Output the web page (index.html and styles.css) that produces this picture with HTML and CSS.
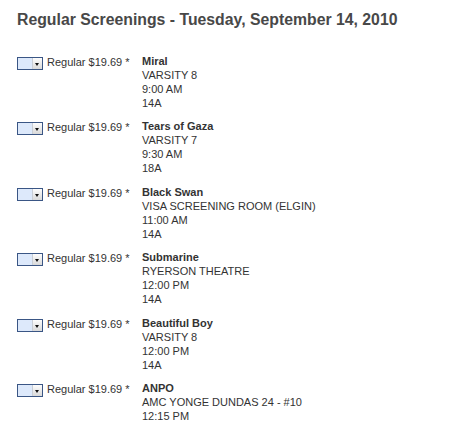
FILE: index.html
```html
<!DOCTYPE html>
<html lang="en">
<head>
    <meta charset="UTF-8">
    <title>Regular Screenings</title>
    <link rel="stylesheet" href="styles.css">
</head>
<body>
    <div class="page">
        <h1>Regular Screenings - Tuesday, September 14, 2010</h1>

        <div class="screening">
            <span class="picker"><span class="picker-btn"></span></span>
            <span class="price">Regular $19.69 *</span>
            <div class="info">
                <strong>Miral</strong>
                <div>VARSITY 8</div>
                <div>9:00 AM</div>
                <div>14A</div>
            </div>
        </div>

        <div class="screening">
            <span class="picker"><span class="picker-btn"></span></span>
            <span class="price">Regular $19.69 *</span>
            <div class="info">
                <strong>Tears of Gaza</strong>
                <div>VARSITY 7</div>
                <div>9:30 AM</div>
                <div>18A</div>
            </div>
        </div>

        <div class="screening">
            <span class="picker"><span class="picker-btn"></span></span>
            <span class="price">Regular $19.69 *</span>
            <div class="info">
                <strong>Black Swan</strong>
                <div>VISA SCREENING ROOM (ELGIN)</div>
                <div>11:00 AM</div>
                <div>14A</div>
            </div>
        </div>

        <div class="screening">
            <span class="picker"><span class="picker-btn"></span></span>
            <span class="price">Regular $19.69 *</span>
            <div class="info">
                <strong>Submarine</strong>
                <div>RYERSON THEATRE</div>
                <div>12:00 PM</div>
                <div>14A</div>
            </div>
        </div>

        <div class="screening">
            <span class="picker"><span class="picker-btn"></span></span>
            <span class="price">Regular $19.69 *</span>
            <div class="info">
                <strong>Beautiful Boy</strong>
                <div>VARSITY 8</div>
                <div>12:00 PM</div>
                <div>14A</div>
            </div>
        </div>

        <div class="screening">
            <span class="picker"><span class="picker-btn"></span></span>
            <span class="price">Regular $19.69 *</span>
            <div class="info">
                <strong>ANPO</strong>
                <div>AMC YONGE DUNDAS 24 - #10</div>
                <div>12:15 PM</div>
                <div>14A</div>
            </div>
        </div>
    </div>
</body>
</html>
```

FILE: styles.css
```css
body {
    margin: 0;
    background-color: white;
    font-family: "Liberation Sans", Arial, sans-serif;
    color: #333;
}

.page {
    padding: 0 17px;
}

h1 {
    margin: 11px 0 25px;
    font-size: 15.8px;
    line-height: 18px;
    color: #484848;
}

.screening {
    display: flex;
    align-items: flex-start;
    height: 56px;
    margin-bottom: 9.4px;
    font-size: 11px;
    line-height: 14px;
}

.picker {
    display: flex;
    justify-content: flex-end;
    width: 24px;
    height: 11px;
    margin-top: 3px;
    border: 1px solid #3a5685;
    background-color: #dde9fb;
}

.picker-btn {
    position: relative;
    width: 9px;
    height: 11px;
    background: linear-gradient(#fdfdfd, #d9d9d9);
    border-left: 1px solid #c9ced6;
}

.picker-btn::after {
    content: "";
    position: absolute;
    left: 2px;
    top: 5px;
    border-left: 2.5px solid transparent;
    border-right: 2.5px solid transparent;
    border-top: 3px solid #111;
}

.price {
    width: 95px;
    margin-left: 4px;
    padding-top: 1px;
}

.info strong {
    display: block;
    color: #333;
}
```
